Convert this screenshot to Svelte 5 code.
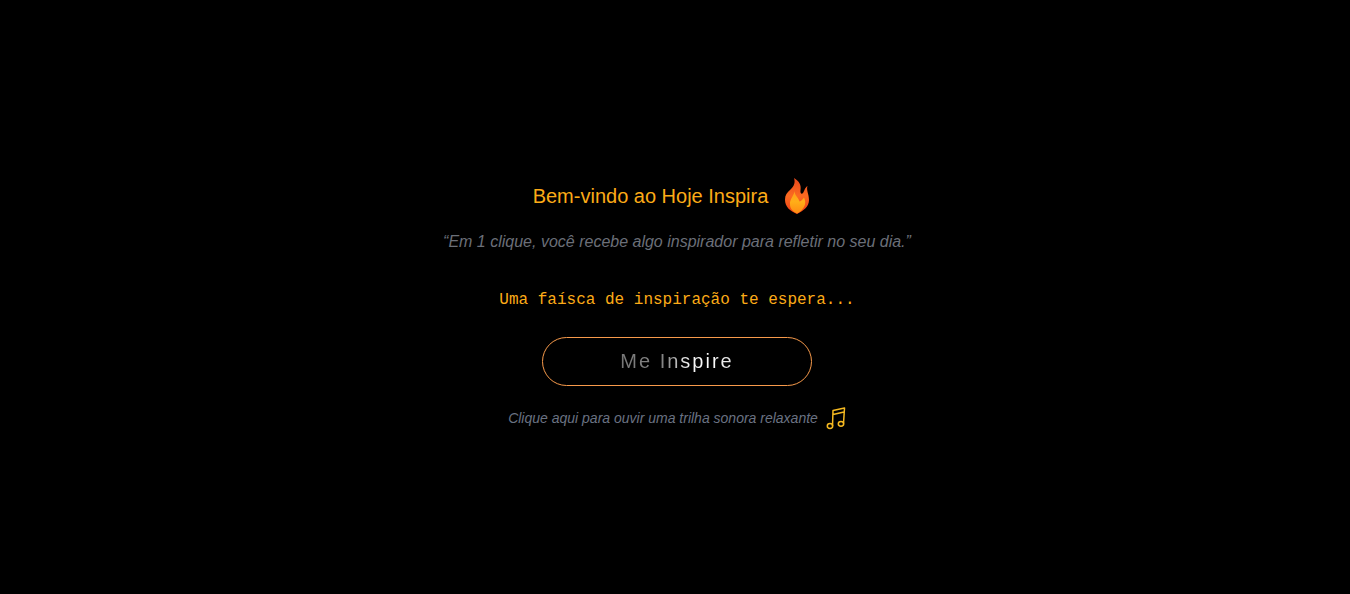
<script>
  let inspired = $state(false);
  let playing = $state(false);
</script>

<main>
  <h1>
    Bem-vindo ao Hoje Inspira
    <svg class="flame" viewBox="0 0 28 38" aria-hidden="true">
      <defs>
        <linearGradient id="outer" x1="0" y1="0" x2="0" y2="1">
          <stop offset="0" stop-color="#e8481c" />
          <stop offset="0.5" stop-color="#fb6a20" />
          <stop offset="1" stop-color="#ee3c14" />
        </linearGradient>
        <linearGradient id="inner" x1="0" y1="0" x2="0" y2="1">
          <stop offset="0" stop-color="#ff9d1c" />
          <stop offset="0.5" stop-color="#ffae18" />
          <stop offset="1" stop-color="#ff8a12" />
        </linearGradient>
      </defs>
      <path fill="url(#outer)" d="M11 1C16 4 18.500 8 17.500 13C17 16 18.500 18 20 16C21.500 14 21.500 11 24.500 9C23 13 26 17 26 23C26 30 20 34 14 37C7 34 2 30 2 22.500C2 18 4 15.500 7.500 12.500C11 9 12.500 6 11 1Z" />
      <path fill="url(#inner)" d="M12 13C10.500 18 15.500 20 16.500 24.500C18.500 24 19.500 22.500 21 20.500C23 25 22.500 28 20 31.500C18.500 34 16 35.500 14 36.500C10 34.500 7 32 7 27.500C6.500 22 11 19 12 13Z" />
    </svg>
  </h1>
  <p class="quote">“Em 1 clique, você recebe algo inspirador para refletir no seu dia.”</p>
  <p class="spark">Uma faísca de inspiração te espera...</p>
  <button class="inspire" type="button" aria-pressed={inspired} onclick={() => (inspired = !inspired)}>
    <span>Me Inspire</span>
  </button>
  <button class="music" type="button" aria-pressed={playing} onclick={() => (playing = !playing)}>
    Clique aqui para ouvir uma trilha sonora relaxante
    <svg class="note" viewBox="0 0 20 24" aria-hidden="true">
      <g fill="none" stroke="currentColor" stroke-width="1.500" stroke-linejoin="round">
        <path d="M6.500 20L7 4.500L18.500 2L17.500 17.500M7 8.500L18 6" />
        <ellipse cx="4" cy="20" rx="2.700" ry="2.400" />
        <ellipse cx="15" cy="17.800" rx="2.700" ry="2.400" />
      </g>
    </svg>
  </button>
</main>

<style>
  :global(body) {
    margin: 0;
    background: #000;
  }
  main {
    min-height: 100vh;
    box-sizing: border-box;
    padding: 16px 16px 4px 20px;
    display: flex;
    flex-direction: column;
    align-items: center;
    justify-content: center;
    font-family: "Liberation Sans", Arial, sans-serif;
    text-align: center;
  }
  h1 {
    margin: 0;
    padding-right: 10px;
    display: flex;
    align-items: center;
    gap: 15px;
    font-size: 20px;
    line-height: 28px;
    font-weight: 400;
    color: #fcab17;
  }
  .flame {
    width: 28px;
    height: 38px;
    flex: none;
  }
  p {
    margin: 0;
    font-size: 16px;
    line-height: 24px;
  }
  .quote {
    margin-top: 15px;
    font-style: italic;
    color: #6b6f78;
  }
  .spark {
    margin-top: 34px;
    font-family: "Liberation Mono", monospace;
    color: #fcab17;
  }
  button {
    font: inherit;
    background: none;
    cursor: pointer;
  }
  .inspire {
    margin-top: 25px;
    width: 270px;
    max-width: 100%;
    padding: 9px 24px;
    border: 1px solid #f79a4b;
    border-radius: 999px;
    font-size: 20px;
    line-height: 29px;
    letter-spacing: 2px;
  }
  .inspire span {
    background: linear-gradient(90deg, #777 0%, #858585 40%, #f2f2f2 60%, #fff 80%, #ddd 100%);
    background-clip: text;
    -webkit-background-clip: text;
    color: transparent;
  }
  .music {
    margin-top: 20px;
    padding: 0;
    border: 0;
    display: flex;
    align-items: center;
    gap: 8px;
    font-size: 14px;
    line-height: 20px;
    font-style: italic;
    color: #6a7282;
  }
  .note {
    width: 20px;
    height: 24px;
    flex: none;
    color: #f5b921;
  }
</style>
